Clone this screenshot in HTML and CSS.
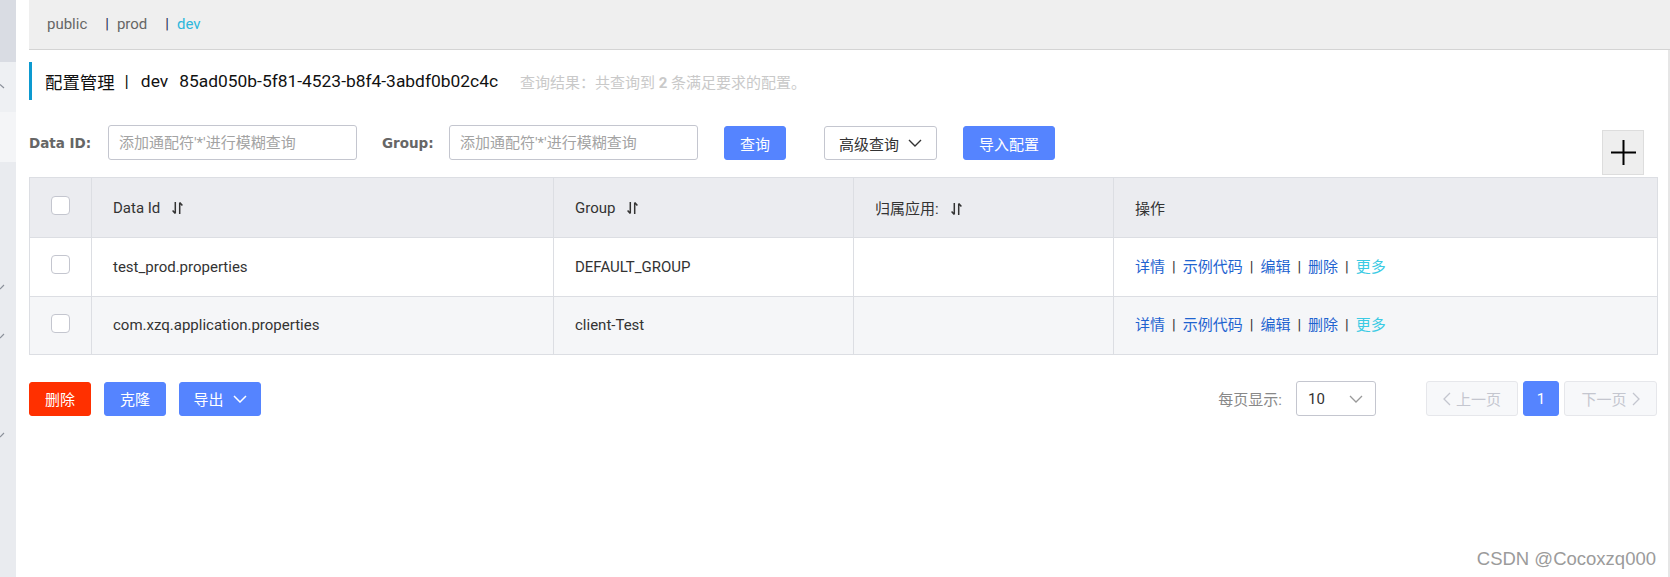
FILE: index.html
```html
<!DOCTYPE html>
<html lang="zh-CN">
<head>
<meta charset="utf-8">
<title>配置管理</title>
<link rel="stylesheet" href="styles.css">
</head>
<body>
<div class="app">
  <aside class="sidebar">
    <div class="sb-top"></div>
    <div class="sb-item sb-open">
      <svg class="sb-chev" width="5" height="8" viewBox="0 0 5 8"><path d="M0 2.5L4 6" stroke="#8a8f99" stroke-width="1.1" fill="none"/></svg>
    </div>
    <div class="sb-item sb-light"></div>
    <div class="sb-rest">
      <div class="sb-row sb-r1"><svg class="sb-chev" width="5" height="8" viewBox="0 0 5 8"><path d="M0 6L4 2" stroke="#8a8f99" stroke-width="1.1" fill="none"/></svg></div>
      <div class="sb-row sb-r2"><svg class="sb-chev" width="5" height="8" viewBox="0 0 5 8"><path d="M0 6L4 2" stroke="#8a8f99" stroke-width="1.1" fill="none"/></svg></div>
      <div class="sb-row sb-r3"><svg class="sb-chev" width="5" height="8" viewBox="0 0 5 8"><path d="M0 6L4 2" stroke="#8a8f99" stroke-width="1.1" fill="none"/></svg></div>
    </div>
  </aside>

  <main class="main">
    <nav class="envbar">
      <span class="env">public</span>
      <span class="env"><span class="env-bar">|</span>prod</span>
      <span class="env env-active"><span class="env-bar">|</span>dev</span>
    </nav>

    <div class="content">
      <h1 class="page-title">
        <span class="pt-name">配置管理</span><span class="pt-sep">|</span><span class="pt-ns">dev</span><span class="pt-id">85ad050b-5f81-4523-b8f4-3abdf0b02c4c</span><span class="pt-result">查询结果：共查询到 <b>2</b> 条满足要求的配置。</span>
      </h1>

      <div class="search-row">
        <label class="s-label s-label-id">Data ID:</label>
        <input class="s-input" type="text" placeholder="添加通配符'*'进行模糊查询">
        <label class="s-label s-label-group">Group:</label>
        <input class="s-input" type="text" placeholder="添加通配符'*'进行模糊查询">
        <button class="btn btn-primary btn-query">查询</button>
        <button class="btn btn-normal btn-adv">高级查询<svg class="chev" width="14" height="8" viewBox="0 0 14 8"><path d="M1 1L7 7L13 1" stroke="#333" stroke-width="1.4" fill="none"/></svg></button>
        <button class="btn btn-primary btn-import">导入配置</button>
        <button class="btn-add" aria-label="新建配置"><svg width="25" height="25" viewBox="0 0 25 25"><path d="M12.5 0V25M0 12.5H25" stroke="#000" stroke-width="2" fill="none"/></svg></button>
      </div>

      <table class="config-table">
        <colgroup>
          <col class="c-check"><col class="c-id"><col class="c-group"><col class="c-app"><col class="c-op">
        </colgroup>
        <thead>
          <tr>
            <th class="cell-check"><span class="checkbox"></span></th>
            <th>Data Id<svg class="sort" width="11" height="14" viewBox="0 0 11 14"><path d="M3.3 1V12.6M3.3 12.6L0.6 9.6M7.7 13V1.4M7.7 1.4L10.4 4.4" stroke="#333" stroke-width="1.5" fill="none"/></svg></th>
            <th>Group<svg class="sort" width="11" height="14" viewBox="0 0 11 14"><path d="M3.3 1V12.6M3.3 12.6L0.6 9.6M7.7 13V1.4M7.7 1.4L10.4 4.4" stroke="#333" stroke-width="1.5" fill="none"/></svg></th>
            <th>归属应用:<svg class="sort" width="11" height="14" viewBox="0 0 11 14"><path d="M3.3 1V12.6M3.3 12.6L0.6 9.6M7.7 13V1.4M7.7 1.4L10.4 4.4" stroke="#333" stroke-width="1.5" fill="none"/></svg></th>
            <th>操作</th>
          </tr>
        </thead>
        <tbody>
          <tr>
            <td class="cell-check"><span class="checkbox"></span></td>
            <td>test_prod.properties</td>
            <td>DEFAULT_GROUP</td>
            <td></td>
            <td class="ops"><a>详情</a><span class="op-sep">|</span><a>示例代码</a><span class="op-sep">|</span><a>编辑</a><span class="op-sep">|</span><a>删除</a><span class="op-sep">|</span><a class="more">更多</a></td>
          </tr>
          <tr class="alt">
            <td class="cell-check"><span class="checkbox"></span></td>
            <td>com.xzq.application.properties</td>
            <td>client-Test</td>
            <td></td>
            <td class="ops"><a>详情</a><span class="op-sep">|</span><a>示例代码</a><span class="op-sep">|</span><a>编辑</a><span class="op-sep">|</span><a>删除</a><span class="op-sep">|</span><a class="more">更多</a></td>
          </tr>
        </tbody>
      </table>

      <div class="footer-row">
        <div class="batch">
          <button class="btn btn-danger">删除</button>
          <button class="btn btn-primary">克隆</button>
          <button class="btn btn-primary btn-export">导出<svg class="chev" width="14" height="8" viewBox="0 0 14 8"><path d="M1 1L7 7L13 1" stroke="#fff" stroke-width="1.5" fill="none"/></svg></button>
        </div>
        <div class="pager">
          <span class="pg-label">每页显示:</span>
          <div class="pg-size"><span>10</span><svg width="14" height="8" viewBox="0 0 14 8"><path d="M1 1L7 7L13 1" stroke="#999" stroke-width="1.3" fill="none"/></svg></div>
          <button class="pg-btn pg-prev"><svg width="8" height="14" viewBox="0 0 8 14"><path d="M7 1L1 7L7 13" stroke="#c4c6cf" stroke-width="1.3" fill="none"/></svg>上一页</button>
          <button class="pg-num">1</button>
          <button class="pg-btn pg-next">下一页<svg width="8" height="14" viewBox="0 0 8 14"><path d="M1 1L7 7L1 13" stroke="#c4c6cf" stroke-width="1.3" fill="none"/></svg></button>
        </div>
      </div>
    </div>
  </main>
</div>
<div class="watermark">CSDN @Cocoxzq000</div>
</body>
</html>
```

FILE: styles.css
```css
* { box-sizing: border-box; }

html, body {
  margin: 0;
  padding: 0;
  background: #fff;
}

body {
  width: 1670px;
  height: 577px;
  overflow: hidden;
  font-family: Roboto, "Noto Sans CJK SC", sans-serif;
  font-size: 15px;
  color: #333;
  position: relative;
}

.app {
  display: flex;
  height: 577px;
}

/* ---------- sidebar ---------- */
.sidebar {
  width: 16px;
  flex: none;
  display: flex;
  flex-direction: column;
  background: #e9ebef;
  overflow: hidden;
}
.sb-top { height: 62px; background: #d9dce3; }
.sb-item { height: 50px; display: flex; align-items: center; }
.sb-open { background: #eef0f3; padding-bottom: 2px; }
.sb-light { background: #f4f5f7; }
.sb-rest { flex: 1; background: #e9ebef; }
.sb-row { height: 8px; display: flex; }
.sb-r1 { margin-top: 121px; }
.sb-r2 { margin-top: 41px; }
.sb-r3 { margin-top: 91px; }
.sb-chev { display: block; }

/* ---------- main ---------- */
.main {
  flex: 1;
  margin-left: 13px;
  display: flex;
  flex-direction: column;
  min-width: 0;
}

.envbar {
  height: 50px;
  flex: none;
  background: #efefef;
  border-bottom: 1px solid #d4d4d4;
  display: flex;
  align-items: center;
  padding-left: 18px;
  padding-bottom: 1px;
  font-size: 15px;
}
.env { color: #666; margin-right: 18px; }
.env-bar { color: #1f2a55; margin-right: 8px; }
.env-active { color: #2db7dc; }

.content {
  flex: 1;
  padding-right: 11px;
  border-right: 2px solid #e6e6e6;
}

/* ---------- title ---------- */
.page-title {
  margin: 12px 0 0;
  height: 38px;
  border-left: 3px solid #0d9ad0;
  padding-left: 13px;
  display: flex;
  align-items: center;
  font-weight: normal;
  font-size: 17.4px;
  color: #111;
  white-space: nowrap;
}
.pt-sep { margin: 0 12px 0 10px; }
.pt-id { margin-left: 11px; }
.pt-result {
  margin-left: 22px;
  font-size: 15px;
  color: #c9c9c9;
}
.pt-result b { font-weight: bold; }

/* ---------- search ---------- */
.search-row {
  margin-top: 25px;
  height: 52px;
  display: flex;
  align-items: flex-start;
}
.s-label {
  flex: none;
  white-space: nowrap;
  font-family: "DejaVu Sans", sans-serif;
  font-weight: bold;
  font-size: 13.5px;
  color: #666;
  height: 35px;
  display: flex;
  align-items: center;
}
.s-label-id { width: 79px; }
.s-label-group { margin-left: 25px; width: 67px; }
.s-input {
  flex: none;
  width: 249px;
  height: 35px;
  border: 1px solid #c4c6cf;
  border-radius: 3px;
  padding: 0 10px;
  font-family: Roboto, "Noto Sans CJK SC", sans-serif;
  font-size: 15px;
  color: #333;
  outline: none;
}
.s-input::placeholder { color: #a3a3a3; }

.btn {
  flex: none;
  height: 34px;
  margin-top: 1px;
  border-radius: 3px;
  border: 1px solid transparent;
  padding: 0;
  font-family: Roboto, "Noto Sans CJK SC", sans-serif;
  font-size: 15px;
  white-space: nowrap;
  display: inline-flex;
  align-items: center;
  justify-content: center;
  cursor: pointer;
}
.btn-primary { background: #5584ff; border-color: #5584ff; color: #fff; }
.btn-normal { background: #fff; border-color: #c4c6cf; color: #333; }
.btn-danger { background: #ff3000; border-color: #ff3000; color: #fff; }
.btn .chev { margin-left: 9px; }

.btn-query { margin-left: 26px; width: 62px; }
.btn-adv { margin-left: 38px; width: 113px; }
.btn-import { margin-left: 26px; width: 92px; }

.btn-add {
  margin-left: auto;
  margin-right: 13px;
  margin-top: 5px;
  width: 42px;
  height: 45px;
  background: #eeeeee;
  border: 1px solid #dddddd;
  padding: 0;
  display: flex;
  align-items: center;
  justify-content: center;
}
.btn-add svg { display: block; }

/* ---------- table ---------- */
.config-table {
  width: 1628px;
  border-collapse: collapse;
  table-layout: fixed;
  font-size: 15px;
  color: #333;
}
.c-check { width: 62px; }
.c-id { width: 462px; }
.c-group { width: 300px; }
.c-app { width: 260px; }
.c-op { width: 544px; }

.config-table th,
.config-table td {
  border: 1px solid #dcdee3;
  text-align: left;
  padding: 0 21px;
  font-weight: normal;
  white-space: nowrap;
}
.config-table th {
  height: 60px;
  background: #ebecf0;
}
.config-table td { height: 58.5px; background: #fff; }
.config-table tr.alt td { background: #f5f6f8; }

.config-table .cell-check {
  padding: 0 0 5px;
  text-align: center;
}
.checkbox {
  display: inline-block;
  width: 19px;
  height: 19px;
  border: 1px solid #c4c6cf;
  border-radius: 4px;
  background: #fff;
  vertical-align: middle;
}
.sort {
  margin-left: 12px;
  vertical-align: -2px;
}

.ops { padding-bottom: 3px !important; }
.ops a { color: #1f64d0; }
.ops a.more { color: #3ccbe4; }
.op-sep { color: #333; margin: 0 7px; }

/* ---------- footer ---------- */
.footer-row {
  margin-top: 26px;
  display: flex;
  justify-content: space-between;
  align-items: center;
  width: 1628px;
}
.batch { display: flex; }
.batch .btn { margin-top: 0; width: 62px; margin-right: 13px; }
.batch .btn-export { width: 82px; }

.pager { display: flex; align-items: center; }
.pg-label { color: #888; font-size: 15px; margin-right: 14px; }
.pg-size {
  width: 80px;
  height: 35px;
  border: 1px solid #c4c6cf;
  border-radius: 3px;
  display: flex;
  align-items: center;
  justify-content: space-between;
  padding: 0 12px 0 11px;
  color: #333;
}
.pg-btn {
  height: 35px;
  width: 92px;
  background: #f7f8fa;
  border: 1px solid #e6e7eb;
  border-radius: 3px;
  color: #c4c6cf;
  font-family: Roboto, "Noto Sans CJK SC", sans-serif;
  font-size: 15px;
  display: flex;
  align-items: center;
  justify-content: center;
  padding: 0;
  gap: 5px;
}
.pg-prev { margin-left: 50px; }
.pg-next { width: 93px; }
.pg-num {
  width: 36px;
  height: 35px;
  margin: 0 5px;
  background: #5584ff;
  border: 1px solid #5584ff;
  border-radius: 3px;
  color: #fff;
  font-family: Roboto, "Noto Sans CJK SC", sans-serif;
  font-size: 15px;
  padding: 0;
}

/* ---------- watermark ---------- */
.watermark {
  position: absolute;
  right: 14px;
  bottom: 7px;
  font-family: "Liberation Sans", Arial, sans-serif;
  font-size: 18.5px;
  color: #9b9b9b;
  text-shadow: 0 0 2px #fff;
}
```
